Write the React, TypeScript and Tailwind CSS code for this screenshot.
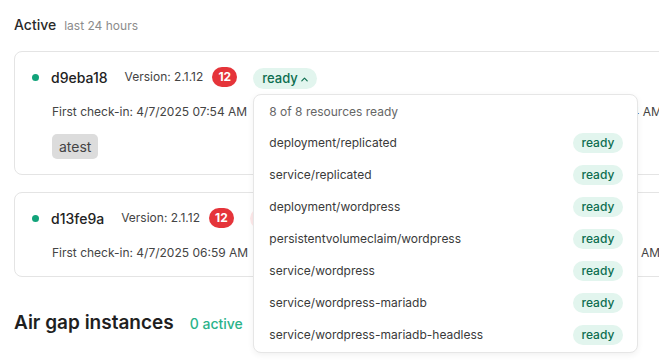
import React from "react";

const resources = [
  "deployment/replicated",
  "service/replicated",
  "deployment/wordpress",
  "persistentvolumeclaim/wordpress",
  "service/wordpress",
  "service/wordpress-mariadb",
  "service/wordpress-mariadb-headless",
];

const ChevronUp = () => (
  <svg width="9" height="9" viewBox="0 0 10 10" fill="none" className="ml-[2px] mt-[2px]">
    <polyline points="2,6.5 5,3.5 8,6.5" stroke="#0d6e50" strokeWidth="1.3" strokeLinecap="round" strokeLinejoin="round" />
  </svg>
);

const ReadyPill = () => (
  <span className="inline-flex items-center h-[20px] px-[9px] rounded-full bg-[#e2f5ee] text-[12px] font-medium text-[#0d6e50]">
    ready
  </span>
);

const ResourcesMenu = () => (
  <div className="absolute left-0 top-[29px] z-10 w-[385px] rounded-lg border border-[#e6e6e6] bg-white shadow-[0_2px_6px_rgba(0,0,0,0.06)] pl-[15px] pr-[14px] pt-[9px] pb-[1px]">
    <div className="text-[12px] leading-[16px] text-[#666]">8 of 8 resources ready</div>
    <div className="mt-[7px]">
      {resources.map((r) => (
        <div key={r} className="flex items-center justify-between h-[32px]">
          <span className="text-[12px] text-[#3a3a3a]">{r}</span>
          <ReadyPill />
        </div>
      ))}
    </div>
  </div>
);

const InstanceCard = ({
  id,
  firstCheckIn,
  lastCheckIn,
  tag,
  open,
}: {
  id: string;
  firstCheckIn: string;
  lastCheckIn: string;
  tag?: string;
  open?: boolean;
}) => {
  return (
    <div className="w-[760px] rounded-lg border border-[#e4e4e4] bg-white pl-[17px] pt-[14px] pb-[15px]">
      <div className="flex items-center h-[22px]">
        <span className="w-[7px] h-[7px] rounded-full bg-[#12a37a]" />
        <span className="ml-[12px] text-[14px] font-medium text-[#222]">{id}</span>
        <span className="ml-[17px] text-[12px] text-[#444]">Version: 2.1.12</span>
        <span className="ml-[9px] inline-flex items-center justify-center h-[20px] w-[25px] rounded-full bg-[#e5343a] text-[12px] font-bold text-white">
          12
        </span>
        {open ? (
          <div className="relative ml-[16px]">
            <span className="inline-flex items-center h-[21px] pl-[9px] pr-[8px] rounded-full bg-[#e2f5ee] text-[13px] font-medium text-[#0d6e50]">
              ready
              <ChevronUp />
            </span>
            <ResourcesMenu />
          </div>
        ) : (
          <span className="ml-[16px] h-[21px] w-[80px] rounded-full bg-[#fde8e9]" />
        )}
      </div>
      <div className="flex mt-[16px] text-[12px] leading-[16px] text-[#444] pl-[20px]">
        <span className="w-[415px]">First check-in: {firstCheckIn}</span>
        <span>Last check-in: {lastCheckIn}</span>
      </div>
      {tag && (
        <div className="mt-[14px] pl-[20px]">
          <span className="inline-flex items-center h-[25px] px-[7px] rounded-[5px] bg-[#dcdcdc] text-[14px] text-[#444]">
            {tag}
          </span>
        </div>
      )}
    </div>
  );
};

export default function App() {
  return (
    <div className="w-[659px] h-[361px] overflow-hidden bg-white font-['Inter',sans-serif]">
      <div className="pl-[14px] pt-[16px]">
        <div className="flex items-baseline gap-[8px] h-[18px] leading-[18px]">
          <span className="text-[14px] font-medium text-[#2a2a2a]">Active</span>
          <span className="text-[12px] text-[#8c8c8c]">last 24 hours</span>
        </div>
        <div className="mt-[17px]">
          <InstanceCard id="d9eba18" firstCheckIn="4/7/2025 07:54 AM" lastCheckIn="4/8/2025 07:54 AM" tag="atest" open />
        </div>
        <div className="mt-[17px]">
          <InstanceCard id="d13fe9a" firstCheckIn="4/7/2025 06:59 AM" lastCheckIn="4/8/2025 10:59 AM" />
        </div>
        <div className="flex items-baseline gap-[16px] mt-[32px] h-[28px] leading-[28px]">
          <span className="text-[19px] font-semibold text-[#1f1f1f]">Air gap instances</span>
          <span className="text-[14px] font-medium text-[#2ab38a]">0 active</span>
        </div>
        <div className="mt-[24px] w-[760px] h-[40px] rounded-lg border border-[#e4e4e4]" />
      </div>
    </div>
  );
}
